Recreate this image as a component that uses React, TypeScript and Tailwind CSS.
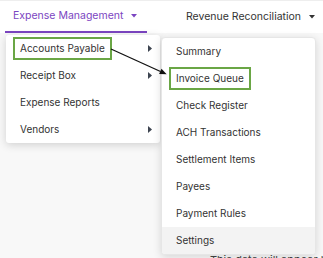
import { ChevronRight } from 'lucide-react';

const leftItems = [
  { label: 'Accounts Payable', sub: true, boxed: true },
  { label: 'Receipt Box', sub: true },
  { label: 'Expense Reports', sub: false },
  { label: 'Vendors', sub: true },
];

const rightItems = [
  'Summary',
  'Invoice Queue',
  'Check Register',
  'ACH Transactions',
  'Settlement Items',
  'Payees',
  'Payment Rules',
  'Settings',
];

function CaretDown({ className }: { className?: string }) {
  return (
    <svg width="6" height="4" viewBox="0 0 6 4" className={className}>
      <path d="M0 0h6L3 3.6z" fill="currentColor" />
    </svg>
  );
}

function CaretRight() {
  return (
    <svg width="4" height="7" viewBox="0 0 4 7" className="text-[#3d4450]">
      <path d="M0 0l4 3.5L0 7z" fill="currentColor" />
    </svg>
  );
}

export default function App() {
  return (
    <div className="relative w-[323px] h-[258px] overflow-hidden bg-[#f8f8f8] font-['Inter',sans-serif] text-[#333]">
      {/* top nav */}
      <nav className="flex h-[33px] bg-white border-t border-[#eeeeee]">
        <div className="ml-[5px] w-[142px] flex items-center gap-[8px] pl-[8px] border-b-2 border-[#7b45c1] text-[#7b45c1] text-[10.5px]">
          <span>Expense Management</span>
          <CaretDown />
        </div>
        <div className="ml-[39px] flex items-center gap-[8px] text-[10.5px] text-[#333]">
          <span>Revenue Reconciliation</span>
          <CaretDown className="text-[#333]" />
        </div>
      </nav>

      <div className="pt-[220px] pl-[210px] text-[11px] leading-[14px] text-[#444] whitespace-nowrap">
        This data will appear here
      </div>

      {/* first level dropdown */}
      <div className="absolute left-[6px] top-[35px] w-[154px] bg-white rounded-[3px] shadow-[0_2px_8px_rgba(0,0,0,0.16)]">
        {leftItems.map((item) => (
          <div key={item.label} className="flex items-center justify-between h-[27px] pl-[7px] pr-[8px] text-[10px]">
            <span
              className={
                item.boxed
                  ? 'px-[5px] py-[2px] border-2 border-[#6aa645]'
                  : 'px-[7px] py-[4px]'
              }
            >
              {item.label}
            </span>
            {item.sub && <CaretRight />}
          </div>
        ))}
      </div>

      {/* second level dropdown */}
      <div className="absolute left-[161px] top-[37px] w-[155px] bg-white rounded-[4px] border border-[#e6e6e6] shadow-[0_2px_8px_rgba(0,0,0,0.14)] overflow-hidden">
        {rightItems.map((label) => (
          <div
            key={label}
            className={`flex items-center h-[27px] pl-[7px] text-[10px] ${label === 'Settings' ? 'bg-[#f3f3f3]' : ''}`}
          >
            <span
              className={
                label === 'Invoice Queue'
                  ? 'px-[5px] py-[2px] border-2 border-[#6aa645]'
                  : 'px-[7px] py-[4px]'
              }
            >
              {label}
            </span>
          </div>
        ))}
      </div>

      {/* annotation arrow */}
      <svg className="absolute inset-0 pointer-events-none" width="323" height="258">
        <line x1="111" y1="49" x2="160.5" y2="71.5" stroke="#111" strokeWidth="1.3" />
        <polygon points="166.7,74.3 159.1,74.1 161.5,68.7" fill="#111" />
      </svg>
    </div>
  );
}
